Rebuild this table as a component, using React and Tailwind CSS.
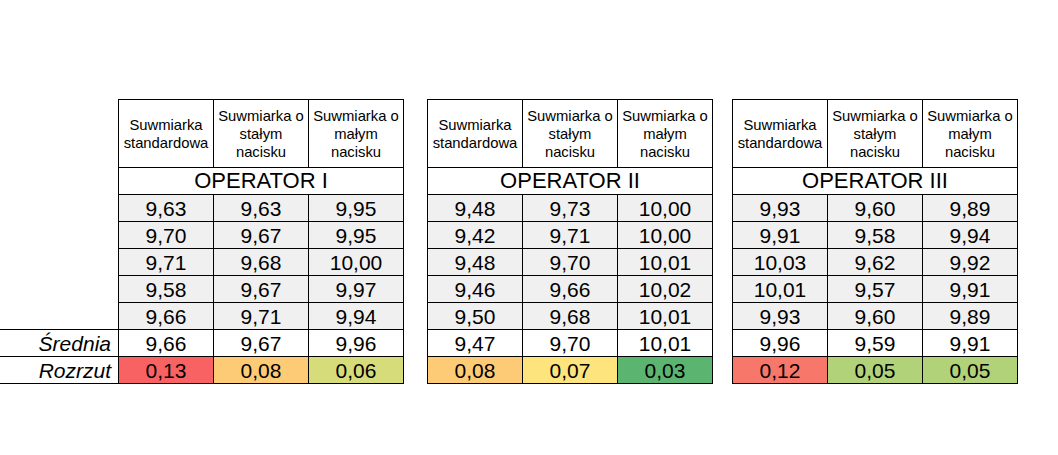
import React from "react";

const headers = [
  ["Suwmiarka", "standardowa"],
  ["Suwmiarka o", "stałym", "nacisku"],
  ["Suwmiarka o", "małym", "nacisku"],
];

const tables = [
  {
    name: "OPERATOR I",
    rows: [
      ["9,63", "9,63", "9,95"],
      ["9,70", "9,67", "9,95"],
      ["9,71", "9,68", "10,00"],
      ["9,58", "9,67", "9,97"],
      ["9,66", "9,71", "9,94"],
    ],
    mean: ["9,66", "9,67", "9,96"],
    spread: [
      ["0,13", "bg-[#f86263]"],
      ["0,08", "bg-[#fdcb75]"],
      ["0,06", "bg-[#d6dc79]"],
    ],
    ml: "",
  },
  {
    name: "OPERATOR II",
    rows: [
      ["9,48", "9,73", "10,00"],
      ["9,42", "9,71", "10,00"],
      ["9,48", "9,70", "10,01"],
      ["9,46", "9,66", "10,02"],
      ["9,50", "9,68", "10,01"],
    ],
    mean: ["9,47", "9,70", "10,01"],
    spread: [
      ["0,08", "bg-[#fdcb75]"],
      ["0,07", "bg-[#fee47d]"],
      ["0,03", "bg-[#5bb570]"],
    ],
    ml: "ml-[23px]",
  },
  {
    name: "OPERATOR III",
    rows: [
      ["9,93", "9,60", "9,89"],
      ["9,91", "9,58", "9,94"],
      ["10,03", "9,62", "9,92"],
      ["10,01", "9,57", "9,91"],
      ["9,93", "9,60", "9,89"],
    ],
    mean: ["9,96", "9,59", "9,91"],
    spread: [
      ["0,12", "bg-[#f8776b]"],
      ["0,05", "bg-[#b1d279]"],
      ["0,05", "bg-[#b1d279]"],
    ],
    ml: "ml-[19px]",
  },
];

function NumCell({ children, bg = "" }) {
  return (
    <div
      className={`h-[27px] border-r border-b border-black flex items-center justify-center text-[21px] leading-none ${bg}`}
    >
      {children}
    </div>
  );
}

function Table({ t }) {
  return (
    <div className={`w-[286px] border-t border-l border-black self-start ${t.ml}`}>
      <div className="grid grid-cols-3">
        {headers.map((h, i) => (
          <div
            key={i}
            className="h-[68px] border-r border-b border-black flex flex-col items-center justify-center text-[14.8px] leading-[18px] text-center"
          >
            {h.map((l, j) => (
              <span key={j} className="whitespace-nowrap">
                {l}
              </span>
            ))}
          </div>
        ))}
      </div>
      <div className="h-[27px] border-r border-b border-black flex items-center justify-center text-[22px] leading-none">
        {t.name}
      </div>
      <div className="grid grid-cols-3">
        {t.rows.map((r, i) =>
          r.map((v, j) => (
            <NumCell key={`${i}-${j}`} bg="bg-[#f0f0f0]">
              {v}
            </NumCell>
          ))
        )}
        {t.mean.map((v, j) => (
          <NumCell key={`m${j}`} bg="bg-white">
            {v}
          </NumCell>
        ))}
        {t.spread.map(([v, bg], j) => (
          <NumCell key={`s${j}`} bg={bg}>
            {v}
          </NumCell>
        ))}
      </div>
    </div>
  );
}

export default function App() {
  return (
    <div className="w-[1058px] h-[455px] bg-white text-black pt-[99px] flex items-start font-['Liberation_Sans',Arial,sans-serif]">
      <div className="w-[118px] flex flex-col shrink-0">
        <div className="h-[230px]" />
        <div className="h-[28px] border-t border-b border-black flex items-center justify-end pr-[7px] italic text-[21px] leading-none">
          Średnia
        </div>
        <div className="h-[27px] border-b border-black flex items-center justify-end pr-[7px] italic text-[21px] leading-none">
          Rozrzut
        </div>
      </div>
      {tables.map((t, i) => (
        <Table key={i} t={t} />
      ))}
    </div>
  );
}
